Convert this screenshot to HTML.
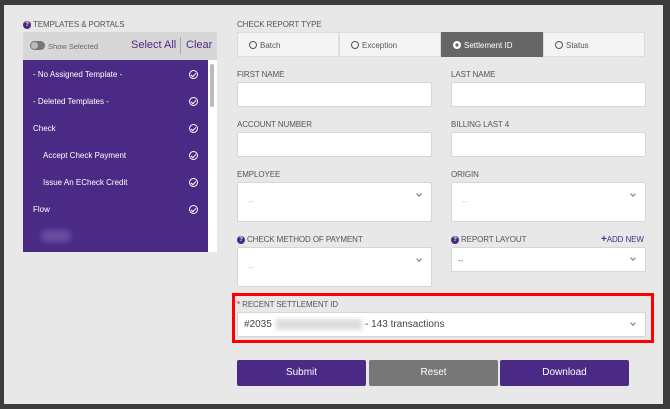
<!DOCTYPE html>
<html><head><style>
*{box-sizing:border-box;margin:0;padding:0}
body{width:670px;height:409px;background:#3c3c3c;font-family:"Liberation Sans",sans-serif;position:relative;overflow:hidden}
.modal{position:absolute;left:4px;top:5px;width:659px;height:399px;background:#e8e8e8}
.abs{position:absolute}
.lbl{position:absolute;font-size:8px;line-height:10px;height:10px;white-space:nowrap;color:#555;letter-spacing:-0.1px}
.inp{position:absolute;background:#fff;border:1px solid #d6d6d6;border-radius:2px}
.q{position:absolute;left:0;top:1px;width:8px;height:8px;border-radius:50%;background:#4b2a85;color:#fff;font-size:6px;text-align:center;line-height:8px;font-weight:bold}
.qp{padding-left:10px}
.row{position:absolute;left:0;width:184px;color:#fff;font-size:8px;line-height:10px;white-space:nowrap}
.chk{position:absolute;right:9px;top:0px;width:9px;height:9px;border:1px solid #fff;border-radius:50%}
.chk:after{content:"";position:absolute;left:2px;top:1px;width:2px;height:4px;border-right:1px solid #fff;border-bottom:1px solid #fff;transform:rotate(45deg)}
.chev{position:absolute;right:10px;width:4px;height:4px;border-right:1px solid #777;border-bottom:1px solid #777;transform:rotate(45deg)}
.seg{position:absolute;top:32px;height:25px;font-size:8px;color:#555;line-height:25px;padding-left:11px;border:1px solid #ddd;background:#f4f4f4}
.rad{display:inline-block;width:8px;height:8px;border:1px solid #555;border-radius:50%;vertical-align:-1px;margin-right:3px}
.btn{position:absolute;top:360px;height:26px;color:#fff;font-size:10px;text-align:center;line-height:26px;border-radius:2px}
.dash{position:absolute;font-size:8px;color:#bbb}
</style></head><body>
<div class="modal"></div>
<div class="lbl qp" style="left:23px;top:20px"><span class="q">?</span>TEMPLATES &amp; PORTALS</div>
<div class="abs" style="left:23px;top:32px;width:194px;height:28px;background:#d7d7d7"></div>
<div class="abs" style="left:30px;top:41px;width:15px;height:9px;border-radius:5px;background:#777"></div>
<div class="abs" style="left:31px;top:42px;width:7px;height:7px;border-radius:50%;background:#bbb"></div>
<div class="abs" style="left:48px;top:42px;font-size:7.5px;color:#666">Show Selected</div>
<div class="abs" style="left:131px;top:39px;font-size:11px;color:#4b2a85">Select All</div>
<div class="abs" style="left:180px;top:37px;width:1px;height:17px;background:#aaa"></div>
<div class="abs" style="left:186px;top:39px;font-size:11px;color:#4b2a85">Clear</div>
<div class="abs" style="left:23px;top:60px;width:185px;height:192px;background:#4b2a85">
<div class="row" style="top:10px;padding-left:10px">- No Assigned Template -<span class="chk"></span></div>
<div class="row" style="top:37px;padding-left:10px">- Deleted Templates -<span class="chk"></span></div>
<div class="row" style="top:64px;padding-left:10px">Check<span class="chk"></span></div>
<div class="row" style="top:91px;padding-left:20px">Accept Check Payment<span class="chk"></span></div>
<div class="row" style="top:118px;padding-left:20px">Issue An ECheck Credit<span class="chk"></span></div>
<div class="row" style="top:145px;padding-left:10px">Flow<span class="chk"></span></div>
<div class="abs" style="left:18px;top:170px;width:30px;height:12px;border-radius:6px;background:#6a4ea0;filter:blur(3px)"></div>
</div>
<div class="abs" style="left:208px;top:60px;width:9px;height:192px;background:#fff"></div>
<div class="abs" style="left:210px;top:64px;width:4px;height:43px;border-radius:2px;background:#bbb"></div>

<div class="lbl" style="left:237px;top:20px">CHECK REPORT TYPE</div>
<div class="seg" style="left:237px;width:102px"><span class="rad"></span>Batch</div>
<div class="seg" style="left:339px;width:102px"><span class="rad"></span>Exception</div>
<div class="seg" style="left:441px;width:102px;background:#666;color:#fff;border-color:#666"><span class="rad" style="border-color:#fff;background:radial-gradient(#666 35%,#fff 40%)"></span>Settlement ID</div>
<div class="seg" style="left:543px;width:102px"><span class="rad"></span>Status</div>

<div class="lbl" style="left:237px;top:70px">FIRST NAME</div>
<div class="lbl" style="left:451px;top:70px">LAST NAME</div>
<div class="inp" style="left:237px;top:82px;width:195px;height:25px"></div>
<div class="inp" style="left:451px;top:82px;width:195px;height:25px"></div>
<div class="lbl" style="left:237px;top:120px">ACCOUNT NUMBER</div>
<div class="lbl" style="left:451px;top:120px">BILLING LAST 4</div>
<div class="inp" style="left:237px;top:132px;width:195px;height:25px"></div>
<div class="inp" style="left:451px;top:132px;width:195px;height:25px"></div>
<div class="lbl" style="left:237px;top:170px">EMPLOYEE</div>
<div class="lbl" style="left:451px;top:170px">ORIGIN</div>
<div class="inp" style="left:237px;top:182px;width:195px;height:40px"><span class="chev" style="top:9px"></span><span class="dash" style="left:10px;top:14px">--</span></div>
<div class="inp" style="left:451px;top:182px;width:195px;height:40px"><span class="chev" style="top:9px"></span><span class="dash" style="left:10px;top:14px">--</span></div>
<div class="lbl qp" style="left:237px;top:235px"><span class="q">?</span>CHECK METHOD OF PAYMENT</div>
<div class="lbl qp" style="left:451px;top:235px"><span class="q">?</span>REPORT LAYOUT</div>
<div class="lbl" style="left:601px;top:235px;color:#4b2a85"><b style="font-size:10px">+</b>ADD NEW</div>
<div class="inp" style="left:237px;top:247px;width:195px;height:40px"><span class="chev" style="top:9px"></span><span class="dash" style="left:10px;top:15px">--</span></div>
<div class="inp" style="left:451px;top:247px;width:195px;height:25px"><span class="chev" style="top:8px"></span><span class="dash" style="left:6px;top:8px;color:#666">--</span></div>

<div class="abs" style="left:232px;top:293px;width:422px;height:50px;border:3px solid #f00"></div>
<div class="lbl" style="left:237px;top:300px"><span style="color:#e00">*</span> RECENT SETTLEMENT ID</div>
<div class="inp" style="left:237px;top:312px;width:409px;height:25px">
<span class="abs" style="left:6px;top:6px;font-size:10px;color:#444">#2035</span>
<span class="abs" style="left:38px;top:6px;width:86px;height:11px;background:#ddd;filter:blur(2px)"></span>
<span class="abs" style="left:127px;top:6px;font-size:10px;color:#444">- 143 transactions</span>
<span class="chev" style="top:8px"></span></div>

<div class="btn" style="left:237px;width:129px;background:#4b2a85">Submit</div>
<div class="btn" style="left:369px;width:129px;background:#777">Reset</div>
<div class="btn" style="left:500px;width:129px;background:#4b2a85">Download</div>
</body></html>
